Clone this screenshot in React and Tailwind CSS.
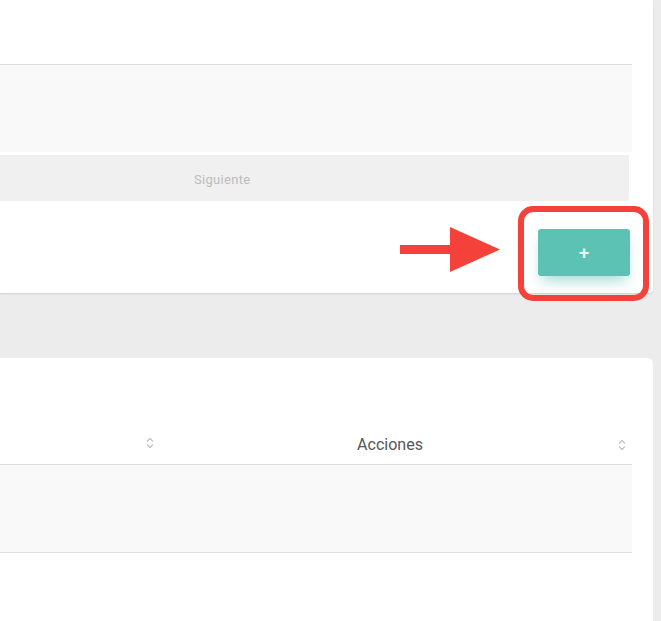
import React from "react";

function SortIcon() {
  return (
    <svg width="8" height="12" viewBox="0 0 8 12" fill="none" stroke="#c4c4c4" strokeWidth="1.4" strokeLinecap="round" strokeLinejoin="round">
      <path d="M1.5 4 L4 1.5 L6.5 4" />
      <path d="M1.5 8 L4 10.5 L6.5 8" />
    </svg>
  );
}

export default function App() {
  return (
    <div className="relative w-[661px] h-[621px] overflow-hidden bg-[#ececec] font-['Roboto',sans-serif]">
      {/* Top card */}
      <div className="w-[653px] h-[293px] bg-white rounded-br-[4px] shadow-[0_1px_2px_rgba(0,0,0,0.12)] flex flex-col">
        <div className="h-[64px] shrink-0" />
        <div className="w-[632px] h-[88px] border-t border-[#dedede] bg-[#f9f9f9] shrink-0" />
        <div className="w-[629px] h-[46px] mt-[3px] bg-[#f0f0f0] rounded-br-[3px] flex items-center pl-[194px] pt-[4px] shrink-0">
          <span className="text-[13px] text-[#bcbcbc] tracking-[0.3px]">Siguiente</span>
        </div>
        <div className="flex justify-end pr-[23px] pt-[28px]">
          <button className="w-[92px] h-[47px] rounded-[3px] bg-[#5bc2b4] text-[#e8fbf8] text-[19px] font-medium leading-none flex items-center justify-center shadow-[0_9px_14px_-4px_rgba(91,194,180,0.55)]">
            +
          </button>
        </div>
      </div>

      {/* Bottom card */}
      <div className="mt-[65px] w-[653px] h-[263px] bg-white rounded-tr-[6px] flex flex-col">
        <div className="h-[64px] shrink-0" />
        <div className="w-[632px] h-[43px] border-b border-[#dedede] flex shrink-0">
          <div className="w-[160px] flex items-center justify-end pr-[6px]">
            <SortIcon />
          </div>
          <div className="flex-1 relative flex items-center justify-center pr-[12px] pt-[3px]">
            <span className="text-[16px] text-[#555555]">Acciones</span>
            <div className="absolute right-[6px] top-0 bottom-0 flex items-center pt-[3px]">
              <SortIcon />
            </div>
          </div>
        </div>
        <div className="w-[632px] h-[88px] bg-[#f9f9f9] border-b border-[#dedede] shrink-0" />
      </div>

      {/* Annotation: red box */}
      <div className="absolute left-[518px] top-[206px] w-[131px] h-[95px] rounded-[15px] border-[6px] border-[#f4423a]" />

      {/* Annotation: arrow */}
      <svg className="absolute left-[398px] top-[224px]" width="104" height="50" viewBox="398 224 104 50">
        <rect x="400" y="245" width="54" height="9" fill="#f4423a" />
        <polygon points="450,227 500,249.5 450,272" fill="#f4423a" />
      </svg>
    </div>
  );
}
